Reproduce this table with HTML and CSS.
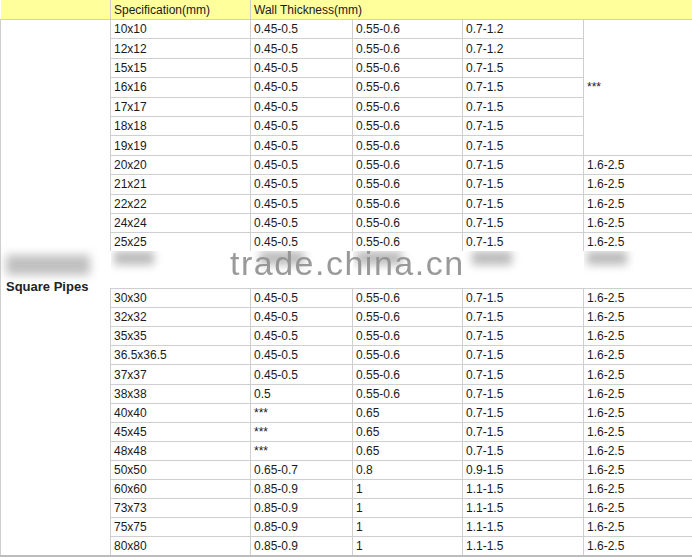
FILE: index.html
```html
<!DOCTYPE html>
<html>
<head>
<meta charset="utf-8">
<link rel="stylesheet" href="styles.css">
</head>
<body>
<div class="wrap">
<table class="spec">
  <colgroup>
    <col class="c1"><col class="c2"><col class="c3"><col class="c4"><col class="c5"><col class="c6">
  </colgroup>
  <thead>
    <tr class="head">
      <td class="blank"></td>
      <td>Specification(mm)</td>
      <td colspan="4">Wall Thickness(mm)</td>
    </tr>
  </thead>
  <tbody>
    <tr class="ra">
      <td rowspan="27" class="label">Square Pipes</td>
      <td>10x10</td><td>0.45-0.5</td><td>0.55-0.6</td><td>0.7-1.2</td>
      <td rowspan="7" class="stars">***</td>
    </tr>
    <tr class="ra"><td>12x12</td><td>0.45-0.5</td><td>0.55-0.6</td><td>0.7-1.2</td></tr>
    <tr class="ra"><td>15x15</td><td>0.45-0.5</td><td>0.55-0.6</td><td>0.7-1.5</td></tr>
    <tr class="ra"><td>16x16</td><td>0.45-0.5</td><td>0.55-0.6</td><td>0.7-1.5</td></tr>
    <tr class="ra"><td>17x17</td><td>0.45-0.5</td><td>0.55-0.6</td><td>0.7-1.5</td></tr>
    <tr class="ra"><td>18x18</td><td>0.45-0.5</td><td>0.55-0.6</td><td>0.7-1.5</td></tr>
    <tr class="ra"><td>19x19</td><td>0.45-0.5</td><td>0.55-0.6</td><td>0.7-1.5</td></tr>
    <tr class="ra"><td>20x20</td><td>0.45-0.5</td><td>0.55-0.6</td><td>0.7-1.5</td><td>1.6-2.5</td></tr>
    <tr class="ra"><td>21x21</td><td>0.45-0.5</td><td>0.55-0.6</td><td>0.7-1.5</td><td>1.6-2.5</td></tr>
    <tr class="ra"><td>22x22</td><td>0.45-0.5</td><td>0.55-0.6</td><td>0.7-1.5</td><td>1.6-2.5</td></tr>
    <tr class="ra"><td>24x24</td><td>0.45-0.5</td><td>0.55-0.6</td><td>0.7-1.5</td><td>1.6-2.5</td></tr>
    <tr class="rcut"><td>25x25</td><td>0.45-0.5</td><td>0.55-0.6</td><td>0.7-1.5</td><td>1.6-2.5</td></tr>
    <tr class="band">
      <td><span class="smudge s1"></span></td><td><span class="smudge s2"></span></td><td><span class="smudge s3"></span></td><td><span class="smudge s4"></span></td><td><span class="smudge s5"></span></td>
    </tr>
    <tr class="rb"><td>30x30</td><td>0.45-0.5</td><td>0.55-0.6</td><td>0.7-1.5</td><td>1.6-2.5</td></tr>
    <tr class="rb"><td>32x32</td><td>0.45-0.5</td><td>0.55-0.6</td><td>0.7-1.5</td><td>1.6-2.5</td></tr>
    <tr class="rb"><td>35x35</td><td>0.45-0.5</td><td>0.55-0.6</td><td>0.7-1.5</td><td>1.6-2.5</td></tr>
    <tr class="rb"><td>36.5x36.5</td><td>0.45-0.5</td><td>0.55-0.6</td><td>0.7-1.5</td><td>1.6-2.5</td></tr>
    <tr class="rb"><td>37x37</td><td>0.45-0.5</td><td>0.55-0.6</td><td>0.7-1.5</td><td>1.6-2.5</td></tr>
    <tr class="rb"><td>38x38</td><td>0.5</td><td>0.55-0.6</td><td>0.7-1.5</td><td>1.6-2.5</td></tr>
    <tr class="rb"><td>40x40</td><td>***</td><td>0.65</td><td>0.7-1.5</td><td>1.6-2.5</td></tr>
    <tr class="rb"><td>45x45</td><td>***</td><td>0.65</td><td>0.7-1.5</td><td>1.6-2.5</td></tr>
    <tr class="rb"><td>48x48</td><td>***</td><td>0.65</td><td>0.7-1.5</td><td>1.6-2.5</td></tr>
    <tr class="rb"><td>50x50</td><td>0.65-0.7</td><td>0.8</td><td>0.9-1.5</td><td>1.6-2.5</td></tr>
    <tr class="rb"><td>60x60</td><td>0.85-0.9</td><td>1</td><td>1.1-1.5</td><td>1.6-2.5</td></tr>
    <tr class="rb"><td>73x73</td><td>0.85-0.9</td><td>1</td><td>1.1-1.5</td><td>1.6-2.5</td></tr>
    <tr class="rb"><td>75x75</td><td>0.85-0.9</td><td>1</td><td>1.1-1.5</td><td>1.6-2.5</td></tr>
    <tr class="rb"><td>80x80</td><td>0.85-0.9</td><td>1</td><td>1.1-1.5</td><td>1.6-2.5</td></tr>
  </tbody>
</table>
<div class="blob"></div>
<div class="watermark">trade.china.cn</div>
</div>
</body>
</html>
```

FILE: styles.css
```css
html, body {
  margin: 0;
  padding: 0;
  background: #ffffff;
  overflow: hidden;
}

.wrap {
  position: relative;
  width: 740px;
}

.spec {
  border-collapse: collapse;
  table-layout: fixed;
  width: 740px;
  font-family: "Liberation Sans", Arial, sans-serif;
  font-size: 12px;
  color: #1a1a1a;
  border-bottom: 2px solid #bdbdbd;
}

.c1 { width: 110px; }
.c2 { width: 140px; }
.c3 { width: 102px; }
.c4 { width: 110px; }
.c5 { width: 121px; }
.c6 { width: 157px; }

.spec td {
  border: 1px solid #cfcfcf;
  padding: 0 0 0 3px;
  white-space: nowrap;
  vertical-align: middle;
  line-height: 14px;
  overflow: hidden;
}

.head td {
  background: #ffff9c;
  height: 19px;
  border-top: none;
  border-left: none;
  border-right: none;
}

.head td + td {
  border-left: 1px solid #cfcfcf;
}

.ra td { height: 18.4px; }
.rb td { height: 18.05px; }

.rcut td {
  height: 18px;
  border-bottom-style: hidden;
}

.band td {
  height: 37px;
  border-left-style: hidden;
  border-right-style: hidden;
  border-top-style: hidden;
  vertical-align: top;
}

.smudge {
  display: block;
  height: 14px;
  margin-top: 0;
  background: #b0b0b0;
  filter: blur(4px);
  opacity: 0.85;
}

.s1 { width: 40px; }
.s2 { width: 44px; margin-left: 6px; }
.s3 { width: 46px; }
.s4 { width: 40px; margin-left: 6px; }
.s5 { width: 40px; }

.label {
  font-weight: bold;
  font-size: 13px;
  padding-left: 5px !important;
  border-left: 1px solid #cfcfcf;
  color: #222;
}

.stars {
  padding-left: 3px;
}

.blob {
  position: absolute;
  left: 6px;
  top: 255px;
  width: 84px;
  height: 20px;
  background: #b0b0b0;
  filter: blur(5px);
  opacity: 0.8;
}

.watermark {
  position: absolute;
  left: 230px;
  top: 250px;
  font-family: "Liberation Sans", Arial, sans-serif;
  font-size: 34px;
  line-height: 26px;
  color: #8f8f8f;
  letter-spacing: 1.5px;
  opacity: 0.9;
}
```
